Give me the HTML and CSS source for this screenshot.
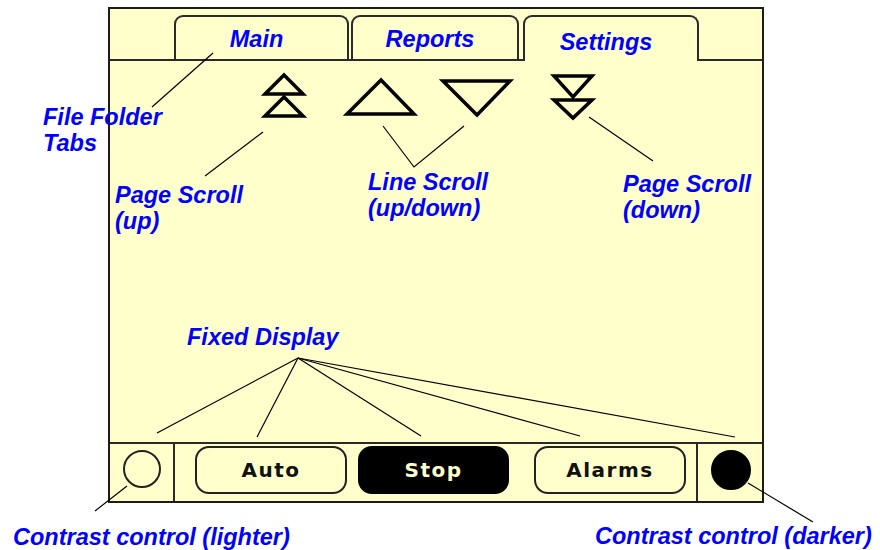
FILE: index.html
```html
<!DOCTYPE html>
<html>
	<head>
		<title>Display layout</title>
		<link rel="stylesheet" href="styles.css">
	</head>
	<body>
		<div id="figure">
			<div id="device">
				<div class="tabs">
					<div class="tab">Main</div>
					<div class="tab">Reports</div>
					<div class="tab active">Settings</div>
				</div>
				<div class="screen"></div>
				<div class="bar">
					<div class="contrast"><span class="dial"></span></div>
					<div class="keys">
						<div class="key">Auto</div>
						<div class="key on">Stop</div>
						<div class="key last">Alarms</div>
					</div>
					<div class="contrast right"><span class="dial dark"></span></div>
				</div>
			</div>

			<svg id="overlay" width="880" height="550" viewBox="0 0 880 550">
				<!-- scroll icons -->
				<g class="icon">
					<polygon points="265,94 284,75 303,94" />
					<polygon points="265,116 284,97 303,116" />
					<polygon points="347,114 381,80 414,114" />
					<polygon points="443,81 510,81 477,115" />
					<polygon points="554,76 592,76 573,97" />
					<polygon points="554,100 592,100 573,118" />
				</g>
				<!-- leader lines -->
				<g class="leader">
					<line x1="213" y1="53" x2="152" y2="107" />
					<line x1="263" y1="132" x2="205" y2="176" />
					<polyline points="383,126 414,167 464,126" />
					<line x1="589" y1="117" x2="653" y2="161" />
					<line x1="298" y1="358" x2="157" y2="433" />
					<line x1="298" y1="358" x2="257" y2="437" />
					<line x1="298" y1="358" x2="421" y2="436" />
					<line x1="298" y1="358" x2="580" y2="436" />
					<line x1="298" y1="358" x2="735" y2="437" />
					<line x1="127" y1="486" x2="95" y2="511" />
					<line x1="748" y1="483" x2="813" y2="522" />
				</g>
			</svg>

			<p class="note folder">File Folder<br>Tabs</p>
			<p class="note page-up">Page Scroll<br>(up)</p>
			<p class="note line-scroll">Line Scroll<br>(up/down)</p>
			<p class="note page-down">Page Scroll<br>(down)</p>
			<p class="note fixed">Fixed Display</p>
			<p class="note lighter">Contrast control (lighter)</p>
			<p class="note darker">Contrast control (darker)</p>
		</div>
	</body>
</html>
```

FILE: styles.css
```css
body {
	margin:0;
	background:#fff;
	font-family:"Liberation Sans", Arial, sans-serif;
}
#figure {
	position:relative;
	width:880px;
	height:550px;
	padding:7px 0 0 108px;
	box-sizing:border-box;
}
#device {
	width:656px;
	height:496px;
	box-sizing:border-box;
	border:2px solid #1c1c1c;
	background:#ffffcc;
	display:flex;
	flex-direction:column;
}

/* tabs */
.tabs {
	height:50px;
	border-bottom:2px solid #2a2a2a;
	display:flex;
	align-items:flex-end;
	padding-left:64px;
	gap:2px;
}
.tab {
	height:44px;
	box-sizing:border-box;
	width:175px;
	border:2px solid #2a2a2a;
	border-bottom:none;
	border-radius:9px 9px 0 0;
	padding:9px 10px 0 0;
	text-align:center;
	font:italic bold 23.5px/26px "Liberation Sans", Arial, sans-serif;
	color:#0000ff;
}
.tab:nth-child(2) {
	width:168px;
}
.tab.active {
	width:176px;
	margin-left:2px;
	height:46px;
	margin-bottom:-2px;
	padding-top:12px;
	background:#ffffcc;
}

.screen {
	flex:1;
}

/* bottom bar */
.bar {
	height:59px;
	box-sizing:border-box;
	border-top:2px solid #2a2a2a;
	display:flex;
}
.contrast {
	width:65px;
	border-right:2px solid #2a2a2a;
	display:flex;
	justify-content:center;
	padding-top:6px;
	box-sizing:border-box;
}
.contrast.right {
	border-right:none;
	border-left:2px solid #2a2a2a;
	width:66px;
	padding-left:2px;
}
.dial {
	width:38px;
	height:38px;
	box-sizing:border-box;
	border:2px solid #222;
	border-radius:50%;
}
.dial.dark {
	width:40px;
	height:40px;
	background:#000;
	border-color:#000;
}
.keys {
	flex:1;
	display:flex;
	align-items:flex-start;
	padding:2px 0 0 20px;
	gap:11px;
}
.key {
	width:152px;
	height:48px;
	box-sizing:border-box;
	border:2px solid #222;
	border-radius:14px;
	display:flex;
	align-items:center;
	justify-content:center;
	font:bold 20px "DejaVu Sans", sans-serif;
	letter-spacing:1.5px;
	color:#111;
}
.key.on {
	width:151px;
	background:#000;
	border-color:#000;
	color:#ffffcc;
}
.key.last {
	margin-left:14px;
}

/* annotations */
#overlay {
	position:absolute;
	left:0;
	top:0;
	pointer-events:none;
}
.icon polygon {
	fill:none;
	stroke:#000;
	stroke-width:3.5;
}
.leader line,
.leader polyline {
	fill:none;
	stroke:#000;
	stroke-width:1.2;
}
.note {
	position:absolute;
	margin:0;
	font:italic bold 23.5px/26px "Liberation Sans", Arial, sans-serif;
	color:#0000ff;
	white-space:nowrap;
}
.folder {
	left:43px;
	top:104px;
}
.page-up {
	left:115px;
	top:182px;
}
.line-scroll {
	left:368px;
	top:169px;
}
.page-down {
	left:623px;
	top:171px;
}
.fixed {
	left:187px;
	top:324px;
}
.lighter {
	left:13px;
	top:524px;
}
.darker {
	left:595px;
	top:523px;
}
```
